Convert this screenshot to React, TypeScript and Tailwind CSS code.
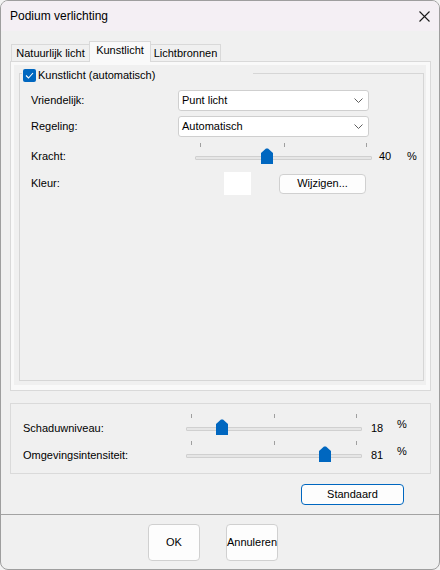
import React from 'react'

const font = "font-['Liberation_Sans',Arial,sans-serif]"

function Chevron() {
  return (
    <svg width="9" height="5" viewBox="0 0 9 5" className="mr-[5px]">
      <path d="M0.5 0.5 L4.5 4.5 L8.5 0.5" fill="none" stroke="#5f5f5f" strokeWidth="1" />
    </svg>
  )
}

function Select({ value }: { value: string }) {
  return (
    <div className="w-[191px] h-[21px] bg-white border border-[#cfcfcf] rounded-[3px] flex items-center justify-between pl-[3px]">
      <span>{value}</span>
      <Chevron />
    </div>
  )
}

function Slider({ value, w }: { value: number; w: number }) {
  const left = Math.round((value / 100) * (w - 12))
  return (
    <div className="relative h-[22px]" style={{ width: w }}>
      {/* ticks */}
      <div className="absolute top-0 left-[5px] w-px h-[4px] bg-[#9f9f9f]" />
      <div className="absolute top-0 left-1/2 w-px h-[4px] bg-[#9f9f9f]" />
      <div className="absolute top-0 right-[5px] w-px h-[4px] bg-[#9f9f9f]" />
      {/* track */}
      <div className="absolute top-[13px] left-0 right-0 h-[4px] bg-[#e6e6e6] border border-[#d0d0d0] rounded-[1px]" />
      {/* thumb */}
      <svg width="12" height="16" viewBox="0 0 12 16" className="absolute top-[5px]" style={{ left }}>
        <path d="M0 5 L5 0.5 L7 0.5 L12 5 L12 16 L0 16 Z" fill="#0067c0" />
      </svg>
    </div>
  )
}

function Button({
  children,
  className = '',
  primary = false,
}: {
  children: React.ReactNode
  className?: string
  primary?: boolean
}) {
  return (
    <div
      className={`flex items-center justify-center bg-[#fdfdfd] border rounded-[4px] ${
        primary ? 'border-[#0067c0]' : 'border-[#d0d0d0]'
      } ${className}`}
    >
      {children}
    </div>
  )
}

export default function App() {
  return (
    <div className={`w-[440px] h-[570px] bg-[#f3f3f3] text-[11px] text-black ${font}`}>
      <div className="w-[440px] h-[570px] border border-[#9e9e9e] rounded-[8px] overflow-hidden bg-[#f0f0f0] flex flex-col">
        {/* title bar */}
        <div className="h-[30px] shrink-0 bg-[#f4eff4] flex items-center justify-between pl-[9px] pr-[9px]">
          <span className="text-[12px]">Podium verlichting</span>
          <svg width="11" height="11" viewBox="0 0 11 11">
            <path d="M0.5 0.5 L10.5 10.5 M10.5 0.5 L0.5 10.5" stroke="#1a1a1a" strokeWidth="1.1" />
          </svg>
        </div>

        <div className="pt-[10px] pl-[9px] pr-[8px]">
          {/* tabs */}
          <div className="h-[20px] flex items-end pl-[1px]">
            <div className="h-[17px] w-[79px] border border-b-0 border-[#d9d9d9] flex items-center justify-center">
              Natuurlijk licht
            </div>
            <div className="relative z-10 -ml-px -mb-px h-[21px] w-[62px] border border-b-0 border-[#d9d9d9] bg-[#f9f9f9] flex items-center justify-center pb-[3px]">
              Kunstlicht
            </div>
            <div className="-ml-px h-[17px] w-[71px] border border-b-0 border-[#d9d9d9] flex items-center justify-center">
              Lichtbronnen
            </div>
          </div>

          {/* tab page */}
          <div className="w-[421px] h-[330px] border border-[#d9d9d9]">
            <div className="h-full border-t-[3px] border-l-[3px] border-r-[4px] border-b-[5px] border-[#f9f9f9] pt-[8px] pl-[5px]">
              <div className="relative w-[405px] h-[308px] border border-[#d6d6d6] pt-[16px] pl-[11px]">
                <div className="absolute left-[2px] top-[-5px] w-[231px] h-[13px] bg-[#f0f0f0] flex items-center gap-[2px] pl-px">
                  <div className="w-[13px] h-[13px] rounded-[2px] bg-[#0067c0] flex items-center justify-center">
                    <svg width="9" height="7" viewBox="0 0 9 7">
                      <path d="M1 3.5 L3.5 6 L8 1" fill="none" stroke="white" strokeWidth="1.1" />
                    </svg>
                  </div>
                  <span>Kunstlicht (automatisch)</span>
                </div>

                <div className="flex items-center h-[21px]">
                  <span className="w-[147px]">Vriendelijk:</span>
                  <Select value="Punt licht" />
                </div>
                <div className="flex items-center h-[21px] mt-[5px]">
                  <span className="w-[147px]">Regeling:</span>
                  <Select value="Automatisch" />
                </div>
                <div className="flex items-start mt-[6px]">
                  <span className="w-[147px] mt-[6px] leading-[14px]">Kracht:</span>
                  <div className="ml-[17px]">
                    <Slider value={40} w={177} />
                  </div>
                  <span className="ml-[7px] w-[28px] mt-[6px] leading-[14px]">40</span>
                  <span className="mt-[6px] leading-[14px]">%</span>
                </div>
                <div className="flex items-center h-[23px] mt-[7px]">
                  <span className="w-[147px]">Kleur:</span>
                  <div className="ml-[46px] w-[27px] h-[23px] bg-white" />
                  <Button className="ml-[28px] w-[87px] h-[20px]">Wijzigen...</Button>
                </div>
              </div>
            </div>
          </div>

          {/* bottom group */}
          <div className="mt-[12px] w-[421px] h-[71px] border border-[#dadada] pt-[10px] pl-[12px]">
            <div className="flex items-start">
              <span className="w-[163px] mt-[7px] leading-[14px]">Schaduwniveau:</span>
              <Slider value={18} w={176} />
              <span className="ml-[9px] w-[26px] mt-[7px] leading-[14px]">18</span>
              <span className="mt-[3px] leading-[14px]">%</span>
            </div>
            <div className="flex items-start mt-[5px]">
              <span className="w-[163px] mt-[7px] leading-[14px]">Omgevingsintensiteit:</span>
              <Slider value={81} w={176} />
              <span className="ml-[9px] w-[26px] mt-[7px] leading-[14px]">81</span>
              <span className="mt-[3px] leading-[14px]">%</span>
            </div>
          </div>

          <div className="mt-[10px] pl-[291px]">
            <Button primary className="w-[103px] h-[21px]">Standaard</Button>
          </div>
        </div>

        <div className="mt-[9px] h-px bg-[#a3a3a3] shrink-0" />

        {/* footer */}
        <div className="mt-[9px] pl-[147px] flex gap-[26px]">
          <Button className="w-[52px] h-[37px]">OK</Button>
          <Button className="w-[52px] h-[37px]">Annuleren</Button>
        </div>
      </div>
    </div>
  )
}
